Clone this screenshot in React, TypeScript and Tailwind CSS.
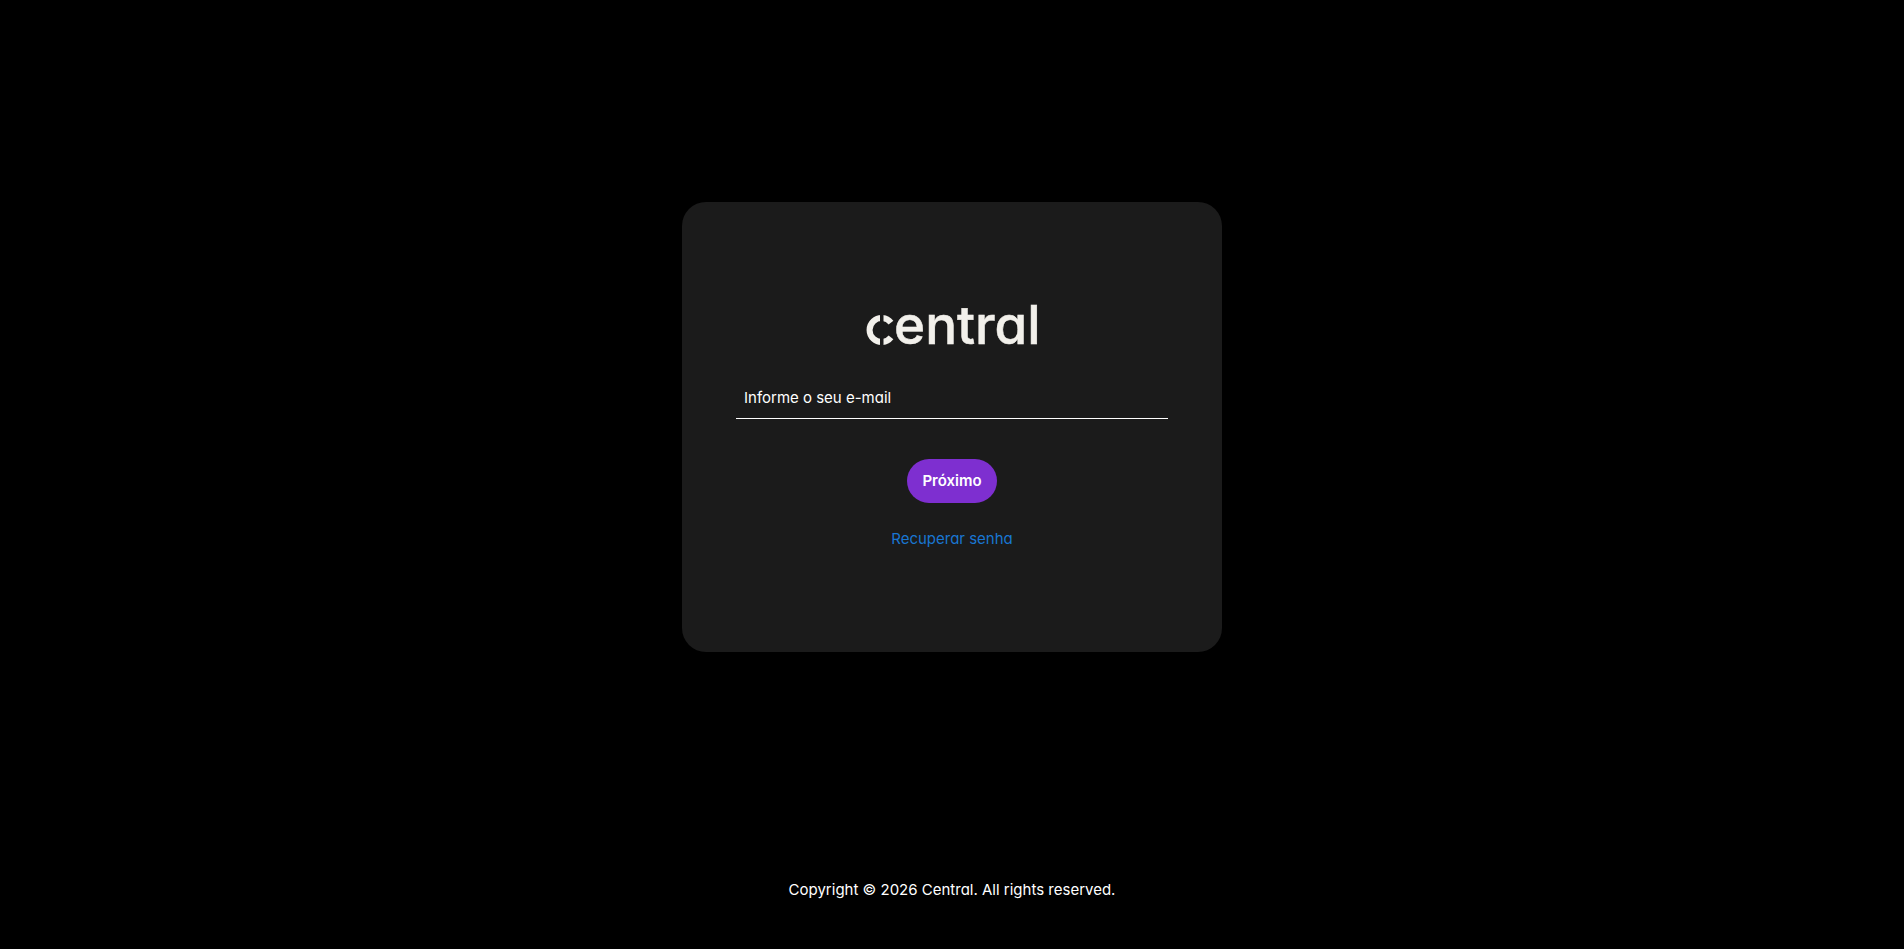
export default function App() {
  return (
    <div className="flex min-h-screen flex-col bg-black font-['Inter',sans-serif] text-[15px] leading-6 text-white [font-feature-settings:'cv11']">
      <main className="flex flex-1 items-center justify-center">
        <form
          className="flex w-full max-w-[540px] flex-col items-center rounded-3xl bg-[#1b1b1b] px-[54px] pt-[86px] pb-[101px]"
          onSubmit={(event) => event.preventDefault()}
        >
          <svg className="h-[73px] w-[184px]" viewBox="-7 -16 184 73" role="img" aria-label="central" fill="none">
            <path d="M24 18.6A12 12 0 1 0 24 33.4" stroke="#f2f0eb" strokeWidth="6" />
            <path d="M13 8h3.5v36h-3.5z" fill="#1b1b1b" />
            <text x="27" y="40" fill="#f2f0eb" stroke="#f2f0eb" strokeWidth="0.5" fontSize="53" fontWeight="500">entral</text>
          </svg>
          <input
            id="email"
            type="email"
            aria-label="Informe o seu e-mail"
            placeholder="Informe o seu e-mail"
            className="mt-4 h-[42px] w-full border-b border-white bg-transparent px-2 outline-none placeholder:text-white"
          />
          <button type="submit" className="mt-10 h-11 w-[90px] rounded-full bg-[#7e2fd0] font-semibold">
            Próximo
          </button>
          <a href="#recuperar" className="mt-6 text-[#1976d2]">Recuperar senha</a>
        </form>
      </main>
      <footer className="pt-6 pb-[47px] text-center">Copyright © 2026 Central. All rights reserved.</footer>
    </div>
  );
}
